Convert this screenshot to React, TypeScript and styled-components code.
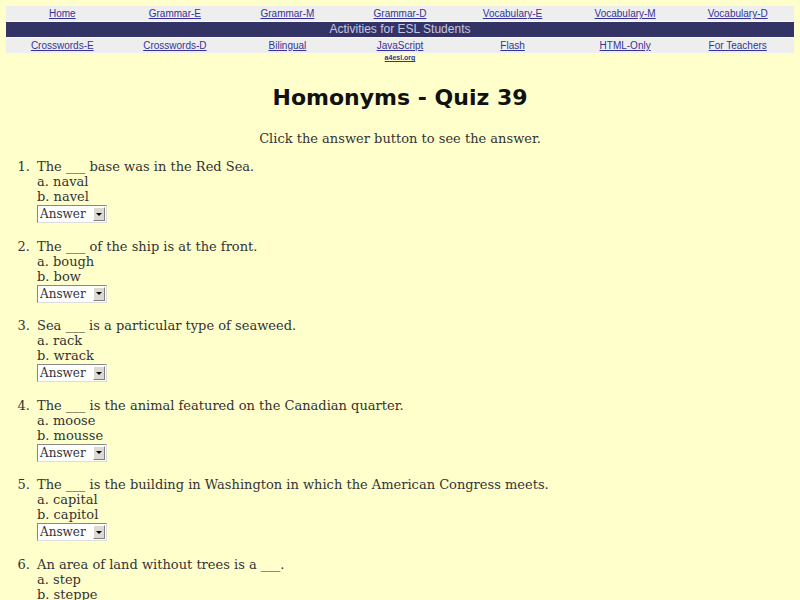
import React from 'react';
import styled, { createGlobalStyle } from 'styled-components';

const GlobalStyle = createGlobalStyle`
  body {
    margin: 6px;
    background: #ffffcc;
    font-family: "DejaVu Serif", "Liberation Serif", serif;
    color: #333333;
  }
`;

const NavRow = styled.div`
  display: grid;
  grid-template-columns: repeat(7, 1fr);
  height: 15px;
  margin-bottom: 1px;
  background: #eeeeee;
  font-family: "Liberation Sans", Arial, sans-serif;
  font-size: 10px;
  line-height: 15px;
  text-align: center;
`;

const Banner = styled.div`
  height: 15px;
  margin-bottom: 1px;
  background: #333366;
  color: #c8c8e4;
  font-family: "Liberation Sans", Arial, sans-serif;
  font-size: 12px;
  line-height: 15px;
  text-align: center;
`;

const NavLink = styled.a`
  color: #333399;
  text-decoration: underline;
`;

const SubRow = styled.div`
  display: grid;
  grid-template-columns: repeat(7, 1fr);
  text-align: center;
  font-family: "Liberation Sans", Arial, sans-serif;
  font-size: 7px;
  font-weight: bold;
  line-height: 8px;
`;

const Title = styled.h1`
  margin: 22px 0 0;
  text-align: center;
  color: #111111;
  font-family: "DejaVu Sans", Verdana, sans-serif;
  font-size: 22px;
  font-weight: bold;
  line-height: 28px;
`;

const Intro = styled.p`
  margin: 19px 0 0;
  text-align: center;
  font-size: 13px;
  line-height: 15px;
`;

const Questions = styled.ol`
  margin: 13px 0 0;
  padding-left: 28px;
  font-size: 13px;
  line-height: 15px;
`;

const Question = styled.li`
  margin-bottom: 15.6px;
  padding-left: 3px;
`;

const Choice = styled.div``;

const SelectBox = styled.div`
  display: inline-flex;
  margin-top: 1px;
  height: 18px;
  border: 1px solid #888888;
  border-right-color: #dddddd;
  border-bottom-color: #dddddd;
  background: #ffffff;
  box-sizing: border-box;
`;

const Select = styled.select`
  appearance: none;
  border: none;
  outline: none;
  background: transparent;
  margin: 0;
  padding: 0 2px;
  width: 54px;
  font-family: "DejaVu Serif", "Liberation Serif", serif;
  font-size: 12px;
  color: #333333;
`;

const Arrow = styled.span`
  width: 12px;
  margin: 1px;
  background: #dcd9d2;
  border: 1px solid #ffffff;
  border-right-color: #808080;
  border-bottom-color: #808080;
  box-sizing: border-box;
  display: flex;
  align-items: center;
  justify-content: center;
  &::after {
    content: '';
    border-left: 3px solid transparent;
    border-right: 3px solid transparent;
    border-top: 3px solid #000000;
  }
`;

const topLinks = ['Home', 'Grammar-E', 'Grammar-M', 'Grammar-D', 'Vocabulary-E', 'Vocabulary-M', 'Vocabulary-D'];
const bottomLinks = ['Crosswords-E', 'Crosswords-D', 'Bilingual', 'JavaScript', 'Flash', 'HTML-Only', 'For Teachers'];

const quiz = [
  { q: 'The ___ base was in the Red Sea.', a: 'naval', b: 'navel' },
  { q: 'The ___ of the ship is at the front.', a: 'bough', b: 'bow' },
  { q: 'Sea ___ is a particular type of seaweed.', a: 'rack', b: 'wrack' },
  { q: 'The ___ is the animal featured on the Canadian quarter.', a: 'moose', b: 'mousse' },
  { q: 'The ___ is the building in Washington in which the American Congress meets.', a: 'capital', b: 'capitol' },
  { q: 'An area of land without trees is a ___.', a: 'step', b: 'steppe' },
];

const App: React.FC = () => {
  return (
    <>
      <GlobalStyle />
      <NavRow>
        {topLinks.map((l) => (
          <div key={l}><NavLink href="#">{l}</NavLink></div>
        ))}
      </NavRow>
      <Banner>Activities for ESL Students</Banner>
      <NavRow>
        {bottomLinks.map((l) => (
          <div key={l}><NavLink href="#">{l}</NavLink></div>
        ))}
      </NavRow>
      <SubRow>
        <div /><div /><div />
        <div><NavLink href="#">a4esl.org</NavLink></div>
      </SubRow>

      <Title>Homonyms - Quiz 39</Title>
      <Intro>Click the answer button to see the answer.</Intro>

      <Questions>
        {quiz.map((item) => (
          <Question key={item.q}>
            {item.q}
            <Choice>a. {item.a}</Choice>
            <Choice>b. {item.b}</Choice>
            <SelectBox>
              <Select defaultValue="Answer">
                <option>Answer</option>
                <option>a</option>
                <option>b</option>
              </Select>
              <Arrow />
            </SelectBox>
          </Question>
        ))}
      </Questions>
    </>
  );
};

export default App;
